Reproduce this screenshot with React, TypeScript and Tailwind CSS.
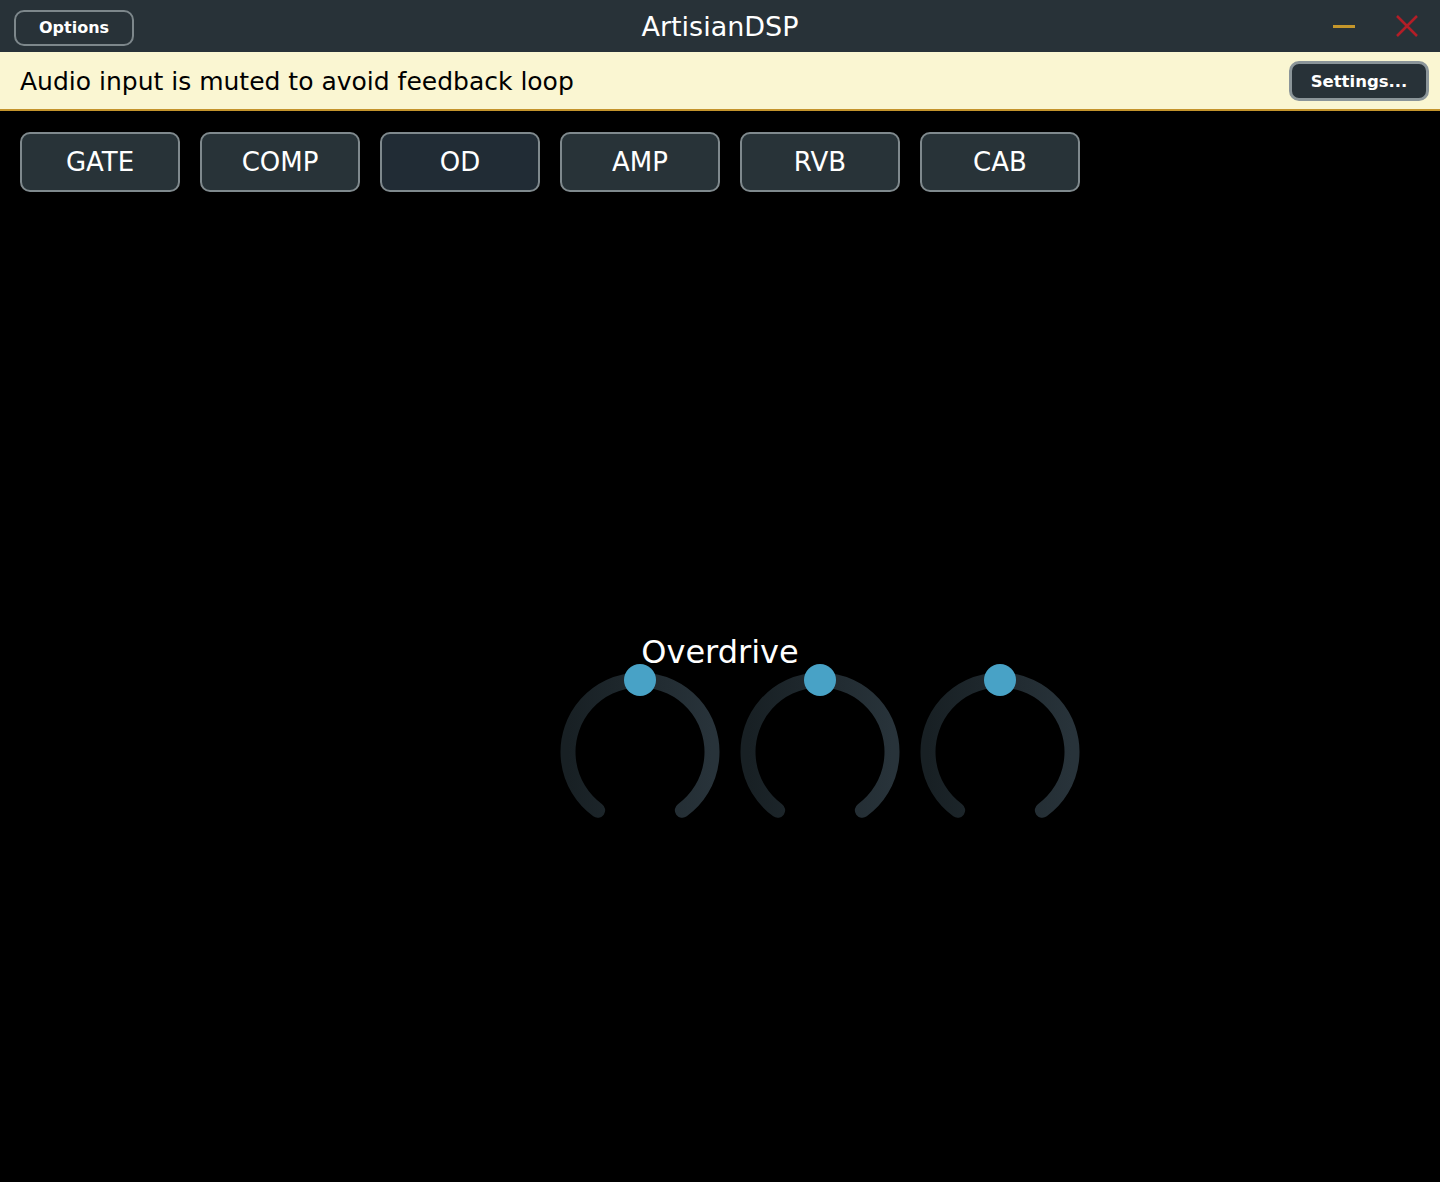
const TABS = ["GATE", "COMP", "OD", "AMP", "RVB", "CAB"];

function Knob() {
  // arc from -144deg to +144deg around the top, radius 72
  const r = 72;
  const cx = 80;
  const cy = 90;
  const a = (144 * Math.PI) / 180;
  const x1 = cx - r * Math.sin(a);
  const y1 = cy - r * Math.cos(a);
  const x2 = cx + r * Math.sin(a);
  return (
    <svg width="160" height="170" viewBox="0 0 160 170">
      <defs>
        <linearGradient id="knobGrad" x1="0" y1="0" x2="1" y2="0">
          <stop offset="0" stopColor="#182024" />
          <stop offset="1" stopColor="#28333a" />
        </linearGradient>
      </defs>
      <path
        d={`M ${x1} ${y1} A ${r} ${r} 0 1 1 ${x2} ${y1}`}
        fill="none"
        stroke="url(#knobGrad)"
        strokeWidth="15"
        strokeLinecap="round"
      />
      <circle cx={cx} cy={cy - r} r="16" fill="#48a2c6" />
    </svg>
  );
}

export default function App() {
  return (
    <div
      className="w-[1440px] h-[1182px] bg-black text-white flex flex-col"
      style={{ fontFamily: '"DejaVu Sans", "Open Sans", sans-serif' }}
    >
      {/* title bar */}
      <div className="h-[52px] bg-[#283238] grid grid-cols-[1fr_auto_1fr] items-center px-[14px]">
        <div className="pt-[3px]">
          <button className="w-[120px] h-[36px] pt-[1px] rounded-[10px] border-2 border-[#7d878b] bg-[#283238] text-[16px] font-bold text-white">
            Options
          </button>
        </div>
        <div className="text-[27px] leading-none">ArtisianDSP</div>
        <div className="flex items-center justify-end gap-[41px] pr-[8px]">
          <div className="w-[22px] h-[3px] bg-[#c4962b]" />
          <svg width="22" height="22" viewBox="0 0 22 22">
            <path d="M1 1 L21 21 M21 1 L1 21" stroke="#b31e27" strokeWidth="2.5" />
          </svg>
        </div>
      </div>

      {/* warning bar */}
      <div className="h-[59px] bg-[#faf6d2] border-b-2 border-[#c4942c] flex items-center justify-between pl-[20px] pr-[11px]">
        <span className="text-[25px] text-black pt-[2px]">Audio input is muted to avoid feedback loop</span>
        <button className="w-[140px] h-[40px] mt-[1px] pt-[3px] rounded-[10px] border-[3px] border-[#8b9599] bg-[#283238] text-[16.5px] font-bold text-white">
          Settings...
        </button>
      </div>

      {/* module tabs */}
      <div className="flex gap-[20px] pl-[20px] pt-[21px]">
        {TABS.map((t) => (
          <button
            key={t}
            className={
              "w-[160px] h-[60px] pt-[1px] rounded-[10px] border-2 border-[#7f898d] text-[26px] text-white " +
              (t === "OD" ? "bg-[#212c35]" : "bg-[#283338]")
            }
          >
            {t}
          </button>
        ))}
      </div>

      {/* module panel */}
      <div className="flex flex-col pt-[444px]">
        <div className="text-center text-[32px] leading-none">Overdrive</div>
        <div className="flex gap-[20px] pl-[560px] -mt-[6px]">
          <Knob />
          <Knob />
          <Knob />
        </div>
      </div>
    </div>
  );
}
